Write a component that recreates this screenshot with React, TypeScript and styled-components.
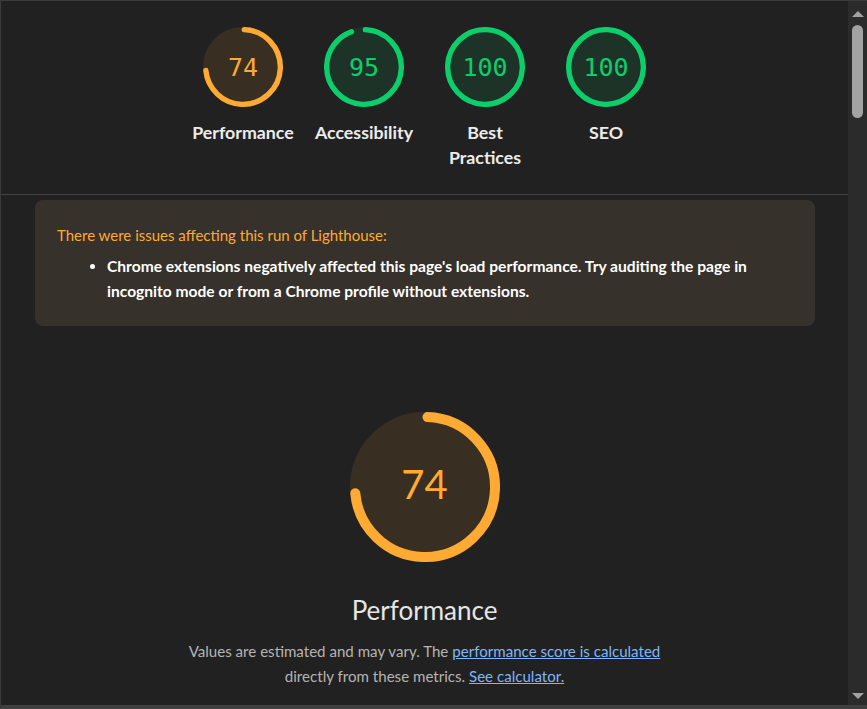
import React from "react";
import styled, { createGlobalStyle } from "styled-components";

const Global = createGlobalStyle`
  html, body { margin: 0; padding: 0; background: #212121; }
  * { box-sizing: border-box; }
`;

const FONT = `Lato, "Noto Sans", sans-serif`;
const MONO = `"DejaVu Sans Mono", "Liberation Mono", monospace`;

const ORANGE = "#ffaa33";
const GREEN = "#0cce6b";

const Frame = styled.div`
  width: 867px;
  height: 709px;
  display: flex;
  overflow: hidden;
  background: #212121;
  border-top: 1px solid #3c3c3c;
  border-left: 1px solid #3a3a3a;
  border-bottom: 4px solid #3f3f3f;
  font-family: ${FONT};
`;

const Content = styled.main`
  flex: 1;
  min-width: 0;
  display: flex;
  flex-direction: column;
  align-items: center;
`;

const ScoresHeader = styled.header`
  align-self: stretch;
  display: flex;
  justify-content: center;
  gap: 21px;
  padding: 26px 0 24px;
  border-bottom: 1px solid #454545;
`;

const GaugeItem = styled.div`
  width: 100px;
  display: flex;
  flex-direction: column;
  align-items: center;
`;

const Dial = styled.div<{ $size: number }>`
  display: grid;
  width: ${(p) => p.$size}px;
  height: ${(p) => p.$size}px;
  & > * {
    grid-area: 1 / 1;
  }
`;

const Score = styled.div<{ $color: string; $big?: boolean }>`
  display: flex;
  align-items: center;
  justify-content: center;
  color: ${(p) => p.$color};
  font-family: ${(p) => (p.$big ? FONT : MONO)};
  font-size: ${(p) => (p.$big ? 40 : 25)}px;
  padding-bottom: ${(p) => (p.$big ? 7 : 0)}px;
  line-height: 1;
`;

const GaugeLabel = styled.div`
  margin-top: 13px;
  color: #ececec;
  font-size: 17.8px;
  font-weight: 700;
  line-height: 25px;
  text-align: center;
`;

const Warnings = styled.section`
  align-self: stretch;
  margin: 5px 33px 0 34px;
  height: 126px;
  padding: 23px 22px 0;
  background: #36312a;
  border-radius: 8px;
`;

const WarningTitle = styled.div`
  color: ${ORANGE};
  font-size: 15px;
  line-height: 25px;
`;

const WarningList = styled.ul`
  margin: 6px 0 0;
  padding-left: 50px;
  color: #ffffff;
  font-size: 15.6px;
  font-weight: 700;
  line-height: 25px;
`;

const Category = styled.section`
  margin-top: 86px;
  display: flex;
  flex-direction: column;
  align-items: center;
`;

const CategoryTitle = styled.h2`
  margin: 32px 0 0;
  color: #e6e6e6;
  font-size: 26px;
  font-weight: 400;
  line-height: 32px;
`;

const Description = styled.p`
  margin: 13px 0 0;
  max-width: 510px;
  color: #b4b4b4;
  font-size: 15.1px;
  line-height: 25px;
  text-align: center;
`;

const Link = styled.a`
  color: #7fb6fa;
  text-decoration: underline;
`;

const Scrollbar = styled.div`
  width: 19px;
  flex-shrink: 0;
  background: #2b2b2b;
  display: flex;
  flex-direction: column;
  align-items: center;
`;

const ArrowButton = styled.div<{ $down?: boolean }>`
  height: 21px;
  width: 100%;
  display: flex;
  align-items: center;
  justify-content: center;
  &::before {
    content: "";
    width: 0;
    height: 0;
    border-left: 6px solid transparent;
    border-right: 6px solid transparent;
    ${(p) =>
      p.$down
        ? `border-top: 6px solid #a3a3a3; margin-top: 2px;`
        : `border-bottom: 6px solid #a3a3a3; margin-top: 4px;`}
  }
`;

const Thumb = styled.div`
  margin-top: 3px;
  width: 11px;
  height: 93px;
  border-radius: 6px;
  background: #a3a3a3;
`;

const Track = styled.div`
  flex: 1;
`;

function Gauge({
  score,
  size,
  color,
  big,
}: {
  score: number;
  size: number;
  color: string;
  big?: boolean;
}) {
  const r = 56;
  const sw = 8;
  const C = 2 * Math.PI * r;
  const rot = -90 + ((0.25 * sw) / C) * 360;
  let arc = (score / 100) * C - sw / 2;
  if (score === 100) arc = C;
  return (
    <Dial $size={size}>
      <svg viewBox="0 0 120 120" width={size} height={size}>
        <circle
          cx="60"
          cy="60"
          r={r}
          strokeWidth={sw}
          fill={color}
          stroke={color}
          opacity={0.1}
        />
        <circle
          cx="60"
          cy="60"
          r={r}
          strokeWidth={sw}
          fill="none"
          stroke={color}
          strokeLinecap="round"
          strokeDasharray={`${Math.max(arc, 0.01)} ${C}`}
          transform={`rotate(${rot} 60 60)`}
        />
      </svg>
      <Score $color={color} $big={big}>
        {score}
      </Score>
    </Dial>
  );
}

const scores = [
  { label: "Performance", score: 74, color: ORANGE },
  { label: "Accessibility", score: 95, color: GREEN },
  { label: "Best Practices", score: 100, color: GREEN },
  { label: "SEO", score: 100, color: GREEN },
];

export default function App() {
  return (
    <>
      <Global />
      <Frame>
        <Content>
          <ScoresHeader>
            {scores.map((s) => (
              <GaugeItem key={s.label}>
                <Gauge score={s.score} size={80} color={s.color} />
                <GaugeLabel>{s.label}</GaugeLabel>
              </GaugeItem>
            ))}
          </ScoresHeader>
          <Warnings>
            <WarningTitle>There were issues affecting this run of Lighthouse:</WarningTitle>
            <WarningList>
              <li>
                Chrome extensions negatively affected this page's load performance. Try
                auditing the page in incognito mode or from a Chrome profile without
                extensions.
              </li>
            </WarningList>
          </Warnings>
          <Category>
            <Gauge score={74} size={150} color={ORANGE} big />
            <CategoryTitle>Performance</CategoryTitle>
            <Description>
              Values are estimated and may vary. The{" "}
              <Link href="#">performance score is calculated</Link> directly from these
              metrics. <Link href="#">See calculator.</Link>
            </Description>
          </Category>
        </Content>
        <Scrollbar>
          <ArrowButton />
          <Thumb />
          <Track />
          <ArrowButton $down />
        </Scrollbar>
      </Frame>
    </>
  );
}
